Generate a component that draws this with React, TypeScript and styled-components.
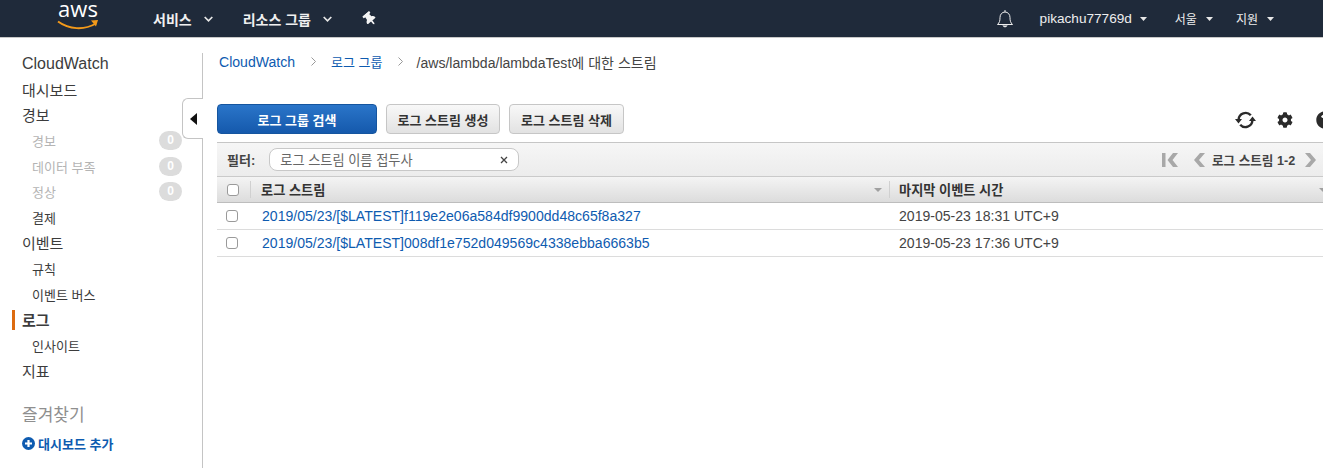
import React from "react";
import styled, { createGlobalStyle } from "styled-components";
import { FaCog, FaQuestionCircle, FaThumbtack } from "react-icons/fa";

const FONT = `"Liberation Sans", "Noto Sans CJK KR", sans-serif`;

const Global = createGlobalStyle`
  html, body { margin: 0; padding: 0; background: #fff; height: 468px; overflow: hidden; }
  body { font-family: ${FONT}; font-size: 13px; color: #444; }
  * { box-sizing: border-box; }
`;

const Page = styled.div`
  width: 1323px; height: 468px; display: flex; flex-direction: column; overflow: hidden;
`;

const TopNav = styled.header`
  height: 38px; flex: none; display: flex; align-items: center; background: #1f2a3a;
  border-bottom: 1px solid #c8c8c8; color: #f2f2f2; padding-left: 57px;
`;
const Logo = styled.svg`
  align-self: flex-start; margin-right: 54px; flex: none; overflow: visible;
`;
const NavItem = styled.div<{ $after: number }>`
  display: flex; align-items: center; gap: 12px; margin-right: ${(p) => p.$after}px;
  font-size: 14px; font-weight: 700; color: #f0f0f0; white-space: nowrap;
`;
const NavRight = styled.div`
  margin-left: auto; display: flex; align-items: center; padding-right: 49px;
`;
const NavSmall = styled.div<{ $after: number; $latin?: boolean }>`
  display: flex; align-items: center; gap: ${(p) => (p.$latin ? 8 : 9)}px; margin-right: ${(p) => p.$after}px;
  font-size: ${(p) => (p.$latin ? 13.6 : 12)}px; color: #eee; white-space: nowrap;
`;
const Chevron = () => (
  <svg width="9" height="6" viewBox="0 0 9 6"><path d="M.7 1l3.800 3.800L8.300 1" fill="none" stroke="#e8e8e8" strokeWidth="1.700" /></svg>
);
const Caret = () => (
  <svg width="7" height="4" viewBox="0 0 7 4"><path d="M0 0h7L3.500 4z" fill="#e8e8e8" /></svg>
);

const Body = styled.div`
  flex: 1; display: flex; min-height: 0;
`;
const Sidebar = styled.nav`
  width: 203px; flex: none; margin-top: 15px; border-right: 1px solid #c4c4c4;
  display: flex; flex-direction: column; position: relative;
`;
const NavList = styled.div`
  display: flex; flex-direction: column; margin-top: -2px;
`;
const SideRow = styled.div<{ $sub?: boolean; $muted?: boolean; $active?: boolean; $latin?: boolean }>`
  height: 25.6px; display: flex; align-items: center; position: relative;
  padding-left: ${(p) => (p.$sub ? 32 : 22)}px; padding-right: 20px; white-space: nowrap;
  font-size: ${(p) => (p.$latin ? 16 : p.$sub ? 13 : 15)}px;
  font-weight: ${(p) => (p.$active ? 700 : 400)};
  color: ${(p) => (p.$muted ? "#b4b4b4" : "#3c3c3c")};
`;
const ActiveBar = styled.i`
  position: absolute; left: 12px; top: 3px; bottom: 3px; width: 3px; background: #dd6b10;
`;
const Count = styled.span`
  margin-left: auto; min-width: 23px; height: 19px; border-radius: 10px; background: #dcdcdc;
  color: #fff; font-size: 12px; font-weight: 700; text-align: center; line-height: 19px;
`;
const FavTitle = styled.div`
  margin: 19px 0 0 22px; font-size: 17px; color: #8f8f8f; height: 26px; line-height: 26px;
`;
const AddDash = styled.a`
  margin: 5px 0 0 22px; display: flex; align-items: center; gap: 3px; color: #0e5bb0;
  font-size: 13px; font-weight: 700; height: 20px;
`;
const Toggle = styled.div`
  position: absolute; left: 182px; top: 45px; width: 21px; height: 41px; background: #fff;
  border: 1px solid #c4c4c4; border-right: none; border-radius: 6px 0 0 6px;
  display: flex; align-items: center; justify-content: center;
`;

const Main = styled.main`
  flex: 1; min-width: 0; padding-left: 14px; display: flex; flex-direction: column;
`;
const Crumbs = styled.div`
  height: 48px; padding: 0 0 1px 2px; display: flex; align-items: center; white-space: nowrap; font-size: 14.07px;
`;
const CrumbLink = styled.a<{ $ko?: boolean }>`
  color: #0e5bb0; font-size: ${(p) => (p.$ko ? 13 : 14.07)}px;
`;
const CrumbSep = styled.svg<{ $l: number; $r: number }>`
  margin: 0 ${(p) => p.$r}px 0 ${(p) => p.$l}px; flex: none;
`;
const CrumbText = styled.span`
  color: #444;
`;
const Actions = styled.div`
  margin-top: 18px; height: 30px; display: flex; align-items: center; gap: 9px; width: 1119px; flex: none;
`;
const Primary = styled.button`
  width: 160px; height: 30px; border: 1px solid #15559f; border-radius: 4px; color: #fff;
  background: linear-gradient(#2a75c9, #1559ac); font: 700 13px ${FONT}; padding: 0;
`;
const Secondary = styled.button<{ $w: number }>`
  width: ${(p) => p.$w}px; height: 30px; border: 1px solid #c6c6c6; border-radius: 4px; color: #333;
  background: linear-gradient(#f8f8f8, #e2e2e2); font: 700 13px ${FONT}; padding: 0;
`;
const Tools = styled.div`
  margin-left: auto; display: flex; align-items: center; color: #2b2b2b; gap: 23px; flex: none;
  padding: 2px 2px 0 0;
`;
const SyncSvg = styled.svg`
  margin-right: -2px;
`;
const Filter = styled.div`
  margin-top: 8px; height: 35px; width: 1120px; flex: none; display: flex; align-items: center;
  background: linear-gradient(#f6f6f6, #ececec); border-top: 1px solid #c6c6c6; border-bottom: 1px solid #cacaca;
  padding-left: 10px; position: relative;
`;
const FilterLabel = styled.span`
  font-size: 13px; font-weight: 700; color: #444; margin-right: 14px;
`;
const FilterBox = styled.div`
  width: 250px; height: 23px; border: 1px solid #c8c8c8; border-radius: 8px; background: #fff;
  display: flex; align-items: center; justify-content: space-between; padding: 0 10px 0 10px;
  font-size: 13.200px; color: #666;
`;
const Pager = styled.div`
  position: absolute; left: 945px; top: 0; bottom: 0; display: flex; align-items: center; font-size: 12.600px;
  font-weight: 700; color: #444; white-space: nowrap;
`;
const PagerIcon = styled.svg<{ $l?: number; $r?: number }>`
  margin-left: ${(p) => p.$l ?? 0}px; margin-right: ${(p) => p.$r ?? 0}px; flex: none;
`;
const HeadRow = styled.div`
  height: 26px; width: 1120px; flex: none; display: grid; grid-template-columns: 33px 639px 1fr; align-items: center;
  background: linear-gradient(#f4f4f4, #dcdcdc); border-bottom: 1px solid #bdbdbd;
  font-size: 13.200px; font-weight: 700; color: #333;
`;
const HeadCell = styled.div<{ $pad: number }>`
  height: 100%; display: flex; align-items: center; position: relative; padding-left: ${(p) => p.$pad}px;
  &::before { content: ""; position: absolute; left: 0; top: 4px; bottom: 4px; width: 1px; background: #d0d0d0; }
`;
const SortMark = styled.i<{ $right: number }>`
  position: absolute; right: ${(p) => p.$right}px; top: 11px; width: 0; height: 0;
  border-left: 4px solid transparent; border-right: 4px solid transparent; border-top: 4px solid #a0a0a0;
`;
const HeadCheckCell = styled.div`
  display: flex; padding-left: 10px;
`;
const Row = styled.div`
  height: 27px; width: 1120px; flex: none; display: grid; grid-template-columns: 33px 639px 1fr; align-items: center;
  border-bottom: 1px solid #dcdcdc; font-size: 14.07px;
`;
const RowCheckCell = styled.div`
  display: flex; padding-left: 9px;
`;
const Check = styled.span`
  width: 12px; height: 12px; border: 1px solid #9a9a9a; border-radius: 3px; background: #fff; display: block;
`;
const StreamLink = styled.a`
  padding-left: 12px; color: #0e5bb0; white-space: nowrap;
`;
const TimeCell = styled.span`
  padding-left: 10px; color: #444; white-space: nowrap;
`;

const Sep = ({ l, r }: { l: number; r: number }) => (
  <CrumbSep $l={l} $r={r} width="5" height="9" viewBox="0 0 5 9"><path d="M.5.500l4 4-4 4" fill="none" stroke="#999" strokeWidth="1" /></CrumbSep>
);

const SyncIcon = () => (
  <SyncSvg width="21" height="20" viewBox="0 0 21 20">
    <path d="M3.600 9.500A7 7 0 0 1 15.800 5.300" fill="none" stroke="#2b2b2b" strokeWidth="2.400" />
    <path d="M17.400 10.500A7 7 0 0 1 5.200 14.700" fill="none" stroke="#2b2b2b" strokeWidth="2.400" />
    <path d="M0 9h7l-3.500 4.500zM14 11h7l-3.500-4.500z" fill="#2b2b2b" />
  </SyncSvg>
);

const ChevL = ({ l, r }: { l?: number; r?: number }) => (
  <PagerIcon $l={l} $r={r} width="12" height="14" viewBox="0 0 12 14"><path d="M7 0h5L6 7l6 7H7L1 7z" fill="#a8a8a8" /></PagerIcon>
);
const ChevR = ({ l, r }: { l?: number; r?: number }) => (
  <PagerIcon $l={l} $r={r} width="12" height="14" viewBox="0 0 12 14"><path d="M0 0h5l6 7-6 7H0l6-7z" fill="#a8a8a8" /></PagerIcon>
);

export default function App() {
  return (
    <Page>
      <Global />
      <TopNav>
        <Logo width="42" height="32" viewBox="0 0 42 32" role="img" aria-label="aws">
          <text x="21" y="17" textAnchor="middle" fontFamily="'Open Sans', sans-serif" fontSize="22" fill="#fff">aws</text>
          <path d="M1 21.500c11 8 26 9 38 2" fill="none" stroke="#f49a1a" strokeWidth="2" />
          <path d="M34 20.500l7-.5-2 6.500" fill="#f49a1a" />
        </Logo>
        <NavItem $after={30}>서비스 <Chevron /></NavItem>
        <NavItem $after={31}>리소스 그룹 <Chevron /></NavItem>
        <FaThumbtack size={14} color="#f4f4f4" style={{ transform: "rotate(-40deg)" }} />
        <NavRight>
          <svg width="18" height="20" viewBox="0 0 18 20" style={{ marginRight: 26 }}>
            <path d="M1.500 15.500c2-2 2.500-3.500 2.500-7 0-3 2-5.500 5-5.500s5 2.500 5 5.500c0 3.500 .5 5 2.500 7z" fill="none" stroke="#eee" strokeWidth="1" />
            <path d="M9 1v2M7 16.500c.3 1.800 3.700 1.800 4 0" fill="#eee" stroke="#eee" strokeWidth="1" />
          </svg>
          <NavSmall $latin $after={28}>pikachu77769d <Caret /></NavSmall>
          <NavSmall $after={23}>서울 <Caret /></NavSmall>
          <NavSmall $after={0}>지원 <Caret /></NavSmall>
        </NavRight>
      </TopNav>
      <Body>
        <Sidebar>
          <NavList>
            <SideRow $latin>CloudWatch</SideRow>
            <SideRow>대시보드</SideRow>
            <SideRow>경보</SideRow>
            <SideRow $sub $muted>경보<Count>0</Count></SideRow>
            <SideRow $sub $muted>데이터 부족<Count>0</Count></SideRow>
            <SideRow $sub $muted>정상<Count>0</Count></SideRow>
            <SideRow $sub>결제</SideRow>
            <SideRow>이벤트</SideRow>
            <SideRow $sub>규칙</SideRow>
            <SideRow $sub>이벤트 버스</SideRow>
            <SideRow $active><ActiveBar />로그</SideRow>
            <SideRow $sub>인사이트</SideRow>
            <SideRow>지표</SideRow>
          </NavList>
          <FavTitle>즐겨찾기</FavTitle>
          <AddDash>
            <svg width="13" height="13" viewBox="0 0 13 13">
              <circle cx="6.500" cy="6.500" r="6.500" fill="#0e5bb0" />
              <path d="M6.500 3v7M3 6.500h7" stroke="#fff" strokeWidth="2.200" />
            </svg>
            대시보드 추가
          </AddDash>
          <Toggle>
            <svg width="7" height="12" viewBox="0 0 7 12"><path d="M7 0v12L0 6z" fill="#111" /></svg>
          </Toggle>
        </Sidebar>
        <Main>
          <Crumbs>
            <CrumbLink>CloudWatch</CrumbLink>
            <Sep l={16} r={15} />
            <CrumbLink $ko>로그 그룹</CrumbLink>
            <Sep l={15} r={14} />
            <CrumbText>/aws/lambda/lambdaTest에 대한 스트림</CrumbText>
          </Crumbs>
          <Actions>
            <Primary>로그 그룹 검색</Primary>
            <Secondary $w={114}>로그 스트림 생성</Secondary>
            <Secondary $w={115}>로그 스트림 삭제</Secondary>
            <Tools>
              <SyncIcon />
              <FaCog size={16} />
              <FaQuestionCircle size={18} />
            </Tools>
          </Actions>
          <Filter>
            <FilterLabel>필터:</FilterLabel>
            <FilterBox>
              <span>로그 스트림 이름 접두사</span>
              <svg width="8" height="8" viewBox="0 0 8 8"><path d="M1 1l6 6M7 1l-6 6" stroke="#444" strokeWidth="1.300" /></svg>
            </FilterBox>
            <Pager>
              <PagerIcon $r={15} width="16" height="14" viewBox="0 0 16 14">
                <path d="M0 0h3.500v14H0zM11 0h5L10.500 7l5.500 7h-5L5.500 7z" fill="#a8a8a8" />
              </PagerIcon>
              <ChevL r={7} />
              로그 스트림 1-2
              <ChevR l={10} />
            </Pager>
          </Filter>
          <HeadRow>
            <HeadCheckCell><Check /></HeadCheckCell>
            <HeadCell $pad={11}>로그 스트림<SortMark $right={7} /></HeadCell>
            <HeadCell $pad={10}>마지막 이벤트 시간<SortMark $right={10} /></HeadCell>
          </HeadRow>
          <Row>
            <RowCheckCell><Check /></RowCheckCell>
            <StreamLink>2019/05/23/[$LATEST]f119e2e06a584df9900dd48c65f8a327</StreamLink>
            <TimeCell>2019-05-23 18:31 UTC+9</TimeCell>
          </Row>
          <Row>
            <RowCheckCell><Check /></RowCheckCell>
            <StreamLink>2019/05/23/[$LATEST]008df1e752d049569c4338ebba6663b5</StreamLink>
            <TimeCell>2019-05-23 17:36 UTC+9</TimeCell>
          </Row>
        </Main>
      </Body>
    </Page>
  );
}
